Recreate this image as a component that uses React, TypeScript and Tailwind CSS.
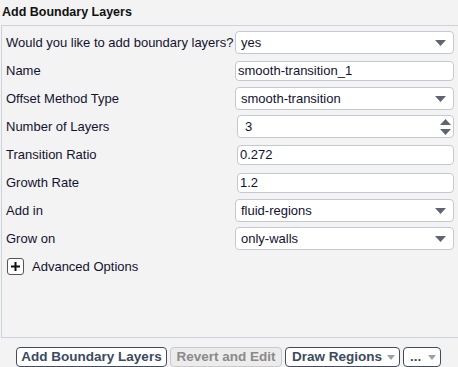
import React from "react";

const font = { fontFamily: '"Liberation Sans", Arial, sans-serif' };

function Caret() {
  return (
    <svg width="11" height="6" viewBox="0 0 11 6" className="shrink-0">
      <path d="M0 0 H11 L5.5 6 Z" fill="#5f6570" />
    </svg>
  );
}

function Select({ value }: { value: string }) {
  return (
    <div className="flex h-[23px] w-[219px] items-center justify-between rounded-[4px] border border-[#c3c9d3] bg-white pl-[5px] pr-[7px]">
      <span>{value}</span>
      <Caret />
    </div>
  );
}

function Input({ value, indent = 0 }: { value: string; indent?: number }) {
  return (
    <div
      className={`flex h-[20px] items-center rounded-[4px] border border-[#c3c9d3] bg-white pl-[2px] ${indent ? "ml-[2px] w-[217px]" : "w-[219px]"}`}
    >
      <span>{value}</span>
    </div>
  );
}

function Spinner({ value }: { value: string }) {
  return (
    <div className="ml-[2px] flex h-[23px] w-[217px] items-center justify-between rounded-[4px] border border-[#c3c9d3] bg-white pl-[7px] pr-[2px]">
      <span>{value}</span>
      <svg width="11" height="16" viewBox="0 0 11 16">
        <path d="M0 6 L5.5 0 L11 6 Z" fill="#5f6570" />
        <path d="M0 10 H11 L5.5 16 Z" fill="#5f6570" />
      </svg>
    </div>
  );
}

function Row({ label, children }: { label: string; children: React.ReactNode }) {
  return (
    <div className="flex h-[28px] items-center">
      <div className="w-[233px] shrink-0 whitespace-nowrap pl-[4px]">{label}</div>
      {children}
    </div>
  );
}

export default function App() {
  return (
    <div
      className="flex h-[367px] w-[458px] flex-col overflow-hidden bg-[#f3f3f3] text-[13px] text-[#121230]"
      style={font}
    >
      <div className="flex h-[25px] items-center whitespace-nowrap pl-[2px] text-[12.5px] font-bold text-[#111]">
        Add Boundary Layers
      </div>
      <div className="ml-[1px] flex h-[315px] flex-col border-l border-t border-b border-[#cdd3de] pt-[3px]">
        <Row label="Would you like to add boundary layers?">
          <Select value="yes" />
        </Row>
        <Row label="Name">
          <Input value="smooth-transition_1" />
        </Row>
        <Row label="Offset Method Type">
          <Select value="smooth-transition" />
        </Row>
        <Row label="Number of Layers">
          <Spinner value="3" />
        </Row>
        <Row label="Transition Ratio">
          <Input value="0.272" indent={1} />
        </Row>
        <Row label="Growth Rate">
          <Input value="1.2" indent={1} />
        </Row>
        <Row label="Add in">
          <Select value="fluid-regions" />
        </Row>
        <Row label="Grow on">
          <Select value="only-walls" />
        </Row>
        <div className="flex h-[28px] items-center pl-[5px]">
          <div className="flex h-[17px] w-[17px] items-center justify-center rounded-[3px] border border-[#555] bg-white">
            <svg width="11" height="11" viewBox="0 0 11 11">
              <path d="M5.5 1 V10 M1 5.5 H10" stroke="#111" strokeWidth="2" />
            </svg>
          </div>
          <span className="ml-[8px] whitespace-nowrap">Advanced Options</span>
        </div>
      </div>
      <div className="mt-[9px] flex items-center gap-[3px] whitespace-nowrap pl-[16px] text-[13.5px] font-bold">
        <div className="flex h-[20px] w-[151px] items-center justify-center rounded-[4px] border border-[#444c5c] bg-white text-[#3c4a60]">
          Add Boundary Layers
        </div>
        <div className="flex h-[20px] w-[112px] items-center justify-center rounded-[4px] border border-[#c9c9c9] bg-[#ececec] text-[#8a8a8a]">
          Revert and Edit
        </div>
        <div className="flex h-[20px] w-[115px] items-center justify-between rounded-[4px] border border-[#444c5c] bg-white pl-[6px] pr-[4px] text-[#3c4a60]">
          Draw Regions
          <svg width="8" height="5" viewBox="0 0 8 5"><path d="M0 0 H8 L4 5 Z" fill="#9aa0aa" /></svg>
        </div>
        <div className="flex h-[20px] w-[38px] items-center justify-between rounded-[4px] border border-[#444c5c] bg-white pl-[6px] pr-[4px] text-[#3c4a60]">
          ...
          <svg width="8" height="5" viewBox="0 0 8 5"><path d="M0 0 H8 L4 5 Z" fill="#9aa0aa" /></svg>
        </div>
      </div>
    </div>
  );
}
